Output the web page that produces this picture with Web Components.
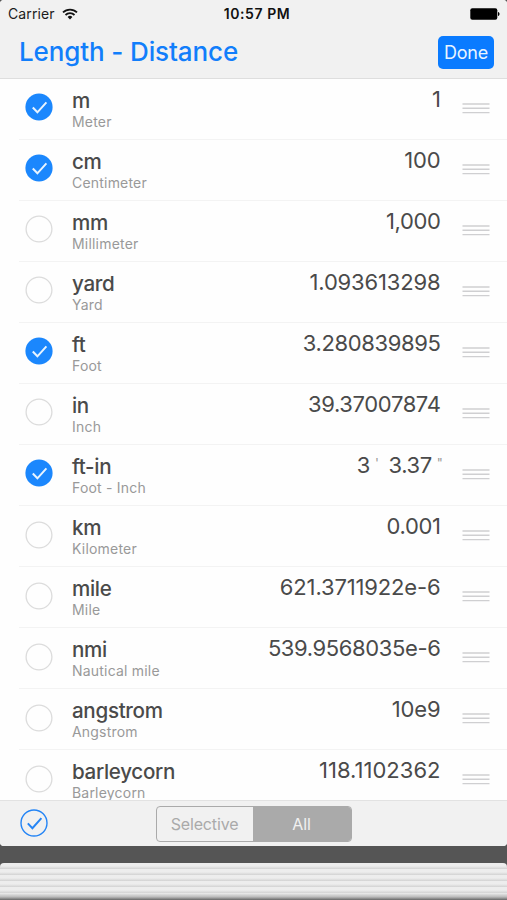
<!DOCTYPE html>
<html lang="en">
<head>
<meta charset="utf-8">
<title>Length - Distance</title>
<style>
  body { margin: 0; background: #555; font-family: Inter, "Liberation Sans", sans-serif; }
  .ones { --tracking: -.15px; }
  .many-ones { --tracking: .02px; }
</style>
</head>
<body>

<unit-screen>
  <status-bar slot="top"></status-bar>
  <nav-header slot="top">Length - Distance<span slot="action">Done</span></nav-header>

  <unit-row checked name="m" label="Meter">1</unit-row>
  <unit-row checked class="ones" name="cm" label="Centimeter">100</unit-row>
  <unit-row name="mm" label="Millimeter">1,000</unit-row>
  <unit-row class="ones" name="yard" label="Yard">1.093613298</unit-row>
  <unit-row checked name="ft" label="Foot">3.280839895</unit-row>
  <unit-row name="in" label="Inch">39.37007874</unit-row>
  <unit-row checked name="ft-in" label="Foot - Inch"><foot-inch feet="3" inches="3.37"></foot-inch></unit-row>
  <unit-row name="km" label="Kilometer">0.001</unit-row>
  <unit-row class="ones" name="mile" label="Mile">621.3711922e-6</unit-row>
  <unit-row name="nmi" label="Nautical mile">539.9568035e-6</unit-row>
  <unit-row class="ones" name="angstrom" label="Angstrom">10e9</unit-row>
  <unit-row class="many-ones" name="barleycorn" label="Barleycorn">118.1102362</unit-row>

  <tool-bar slot="bottom"></tool-bar>
</unit-screen>
<card-stack></card-stack>

<template id="screen">
  <style>
    :host { display: flex; flex-direction: column; height: 846px; background: #fefefe; border-radius: 4px; overflow: hidden; }
    .list { flex: 1; min-height: 0; overflow: hidden; }
  </style>
  <slot name="top"></slot>
  <div class="list"><slot></slot></div>
  <slot name="bottom"></slot>
</template>

<template id="status">
  <style>
    :host { display: grid; grid-template-columns: 1fr auto 1fr; align-items: center; height: 27px; padding: 0 7px 0 8px; background: #f1f1f1; color: #1c1c1c; font-size: 14px; }
    .left { display: flex; align-items: center; gap: 7px; letter-spacing: .1px; }
    .time { font-weight: 600; font-size: 14px; color: #111; letter-spacing: .55px; margin: 0 -3px 0 3px; }
    .battery { justify-self: end; }
    svg { display: block; }
  </style>
  <div class="left">
    <span>Carrier</span>
    <svg width="16" height="12" viewBox="0 0 16 12" fill="none" stroke="#111" stroke-width="1.8">
      <path d="M1 4.4a10 10 0 0 1 14 0M3.5 7a6.4 6.4 0 0 1 9 0"/>
      <path d="M8 11.4 5.6 8.9a3.5 3.5 0 0 1 4.8 0z" fill="#111" stroke="none"/>
    </svg>
  </div>
  <span class="time">10:57 PM</span>
  <svg class="battery" width="30" height="12" viewBox="0 0 30 12">
    <rect x=".3" y=".2" width="27" height="11.6" rx="2"/>
    <path d="M28 4c2 .3 2 3.7 0 4z"/>
  </svg>
</template>

<template id="header">
  <style>
    :host { display: flex; justify-content: space-between; height: 52px; box-sizing: border-box; padding: 0 13px 0 19px; background: #f1f1f1; border-bottom: 1px solid #dedede; }
    h1 { margin: 0; font-size: 26px; font-weight: 500; line-height: 50px; color: #117efb; letter-spacing: -.12px; }
    button { width: 56px; height: 33px; margin-top: 9px; padding: 0; border: 0; border-radius: 5px; background: #0a7bff; color: #e8f4ff; font: 18px/32px Inter, sans-serif; letter-spacing: -.2px; }
  </style>
  <h1><slot></slot></h1>
  <button><slot name="action"></slot></button>
</template>

<template id="row">
  <style>
    :host { display: flex; position: relative; top: -1px; height: 61.04px; box-sizing: border-box; padding: 0 17px 0 25px; color: #4a4a4a; }
    /* divider starts a bit inside the left edge */
    :host::after { content: ""; position: absolute; left: 19px; right: 0; bottom: -1px; height: 1px; background: #f3f3f3; }
    .check { width: 28px; height: 28px; margin-top: 15.3px; flex: none; }
    .check .on { display: none; }
    :host([checked]) .check .on { display: block; }
    :host([checked]) .check .off { display: none; }
    .names { margin-left: 19px; flex: 1; padding-top: 10px; }
    .name { font-size: 20.6px; line-height: 25px; font-weight: 500; letter-spacing: -.32px; }
    .label { font-size: 14px; line-height: 17px; color: #999; letter-spacing: .2px; }
    .value { font-size: 22px; line-height: 26px; padding-top: 8px; letter-spacing: var(--tracking, -.38px); white-space: nowrap; }
    .grip { margin: 25px 0 0 21.5px; width: 28px; height: 11px; flex: none; }
  </style>
  <svg class="check" viewBox="0 0 28 28" fill="none">
    <circle class="off" cx="14" cy="14" r="12.9" stroke="#dcdcdc" stroke-width="1.3"/>
    <g class="on">
      <circle cx="14" cy="14" r="13.6" fill="#1b87fd"/>
      <path d="M7.8 14.5l4.6 4.8 9-10" stroke="#e8f4ff" stroke-width="2"/>
    </g>
  </svg>
  <div class="names">
    <div class="name"></div>
    <div class="label"></div>
  </div>
  <div class="value"><slot></slot></div>
  <svg class="grip" viewBox="0 0 28 11" stroke="#cfcfd1" stroke-width="1.4">
    <path d="M.5 1h27M.5 5.3h27M.5 9.6h27"/>
  </svg>
</template>

<template id="footinch">
  <style>
    :host { display: flex; margin-right: -2px; }
    small { font-size: 13px; line-height: 22px; color: #999; }
    .ft { margin: 0 10px 0 5px; }
    .in { margin-left: 5px; }
  </style>
  <span class="feet"></span><small class="ft">'</small><span class="inches"></span><small class="in">"</small>
</template>

<template id="tools">
  <style>
    :host { display: grid; grid-template-columns: 1fr auto 1fr; height: 46px; box-sizing: border-box; padding: 0 20px; background: #f1f1f1; border-top: 1px solid #e2e2e2; }
    .all { width: 28px; height: 28px; margin-top: 8px; }
    .segments { display: flex; width: 196px; height: 36px; margin-top: 5px; box-sizing: border-box; border: 1px solid #aaa; border-radius: 4px; overflow: hidden; font-size: 16px; line-height: 34px; text-align: center; color: #aaa; letter-spacing: -.15px; }
    .segments span { flex: 0 0 96px; }
    .segments .active { flex: 1; background: #aaa; color: #f1f1f1; }
  </style>
  <svg class="all" viewBox="0 0 28 28" fill="none" stroke="#2585f5">
    <circle cx="14" cy="14" r="13" stroke-width="1.4"/>
    <path d="M7.8 14.4l4.6 4.8 9-10" stroke-width="2"/>
  </svg>
  <div class="segments"><span>Selective</span><span class="active">All</span></div>
</template>

<template id="stack">
  <style>
    :host { display: flex; flex-direction: column; height: 54px; box-sizing: border-box; padding-top: 17px; background: #555; overflow: hidden; }
    .card { height: 6px; background: linear-gradient(#ededed 0 50%, #d2d2d2); }
    style + .card { border-radius: 4px 4px 0 0; }
    .edge { height: 7px; background: linear-gradient(#ececec, #bbb 55%, #666); }
  </style>
  <div class="card"></div>
  <div class="card"></div>
  <div class="card"></div>
  <div class="card"></div>
  <div class="card"></div>
  <div class="edge"></div>
</template>

<script>
  // every element clones its template into an open shadow root
  class Base extends HTMLElement {
    connectedCallback() {
      this.attachShadow({mode: 'open'})
      const tpl = document.querySelector('#' + this.constructor.tpl)
      this.shadowRoot.append(tpl.content.cloneNode(true))
      this.fill()
    }
    fill() {}
    text(selector, attr) {
      this.shadowRoot.querySelector(selector).textContent = this.getAttribute(attr)
    }
  }

  class UnitScreen extends Base { static tpl = 'screen' }
  class StatusBar extends Base { static tpl = 'status' }
  class NavHeader extends Base { static tpl = 'header' }
  class ToolBar extends Base { static tpl = 'tools' }
  class CardStack extends Base { static tpl = 'stack' }

  class UnitRow extends Base {
    static tpl = 'row'
    fill() {
      this.text('.name', 'name')
      this.text('.label', 'label')
      this.shadowRoot.querySelector('.check').addEventListener('click', () => {
        this.toggleAttribute('checked')
      })
    }
  }

  class FootInch extends Base {
    static tpl = 'footinch'
    fill() {
      this.text('.feet', 'feet')
      this.text('.inches', 'inches')
    }
  }

  customElements.define('unit-screen', UnitScreen)
  customElements.define('status-bar', StatusBar)
  customElements.define('nav-header', NavHeader)
  customElements.define('unit-row', UnitRow)
  customElements.define('foot-inch', FootInch)
  customElements.define('tool-bar', ToolBar)
  customElements.define('card-stack', CardStack)
</script>
</body>
</html>
